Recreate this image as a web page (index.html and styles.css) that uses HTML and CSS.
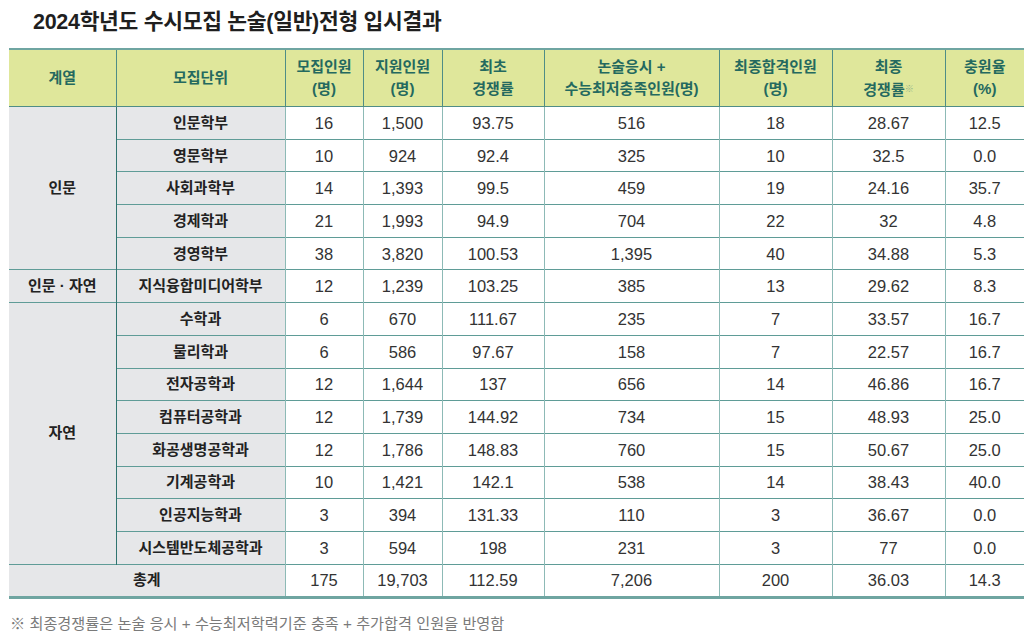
FILE: index.html
```html
<!DOCTYPE html>
<html lang="ko">
<head>
<meta charset="utf-8">
<title>2024학년도 수시모집 논술(일반)전형 입시결과</title>
<link rel="stylesheet" href="styles.css">
</head>
<body>
<div class="page">
  <h1 class="title">2024학년도 수시모집 논술(일반)전형 입시결과</h1>
  <table class="result">
    <colgroup>
      <col class="c1"><col class="c2"><col class="c3"><col class="c4"><col class="c5"><col class="c6"><col class="c7"><col class="c8"><col class="c9">
    </colgroup>
    <thead>
      <tr>
        <th>계열</th>
        <th>모집단위</th>
        <th>모집인원<br>(명)</th>
        <th>지원인원<br>(명)</th>
        <th>최초<br>경쟁률</th>
        <th>논술응시 +<br>수능최저충족인원(명)</th>
        <th>최종합격인원<br>(명)</th>
        <th>최종<br>경쟁률<span class="mark">※</span></th>
        <th>충원율<br>(%)</th>
      </tr>
    </thead>
    <tbody>
      <tr><td class="grp" rowspan="5">인문</td><td class="unit">인문학부</td><td>16</td><td>1,500</td><td>93.75</td><td>516</td><td>18</td><td>28.67</td><td>12.5</td></tr>
      <tr><td class="unit">영문학부</td><td>10</td><td>924</td><td>92.4</td><td>325</td><td>10</td><td>32.5</td><td>0.0</td></tr>
      <tr><td class="unit">사회과학부</td><td>14</td><td>1,393</td><td>99.5</td><td>459</td><td>19</td><td>24.16</td><td>35.7</td></tr>
      <tr><td class="unit">경제학과</td><td>21</td><td>1,993</td><td>94.9</td><td>704</td><td>22</td><td>32</td><td>4.8</td></tr>
      <tr><td class="unit">경영학부</td><td>38</td><td>3,820</td><td>100.53</td><td>1,395</td><td>40</td><td>34.88</td><td>5.3</td></tr>
      <tr><td class="grp">인문 · 자연</td><td class="unit">지식융합미디어학부</td><td>12</td><td>1,239</td><td>103.25</td><td>385</td><td>13</td><td>29.62</td><td>8.3</td></tr>
      <tr><td class="grp" rowspan="8">자연</td><td class="unit">수학과</td><td>6</td><td>670</td><td>111.67</td><td>235</td><td>7</td><td>33.57</td><td>16.7</td></tr>
      <tr><td class="unit">물리학과</td><td>6</td><td>586</td><td>97.67</td><td>158</td><td>7</td><td>22.57</td><td>16.7</td></tr>
      <tr><td class="unit">전자공학과</td><td>12</td><td>1,644</td><td>137</td><td>656</td><td>14</td><td>46.86</td><td>16.7</td></tr>
      <tr><td class="unit">컴퓨터공학과</td><td>12</td><td>1,739</td><td>144.92</td><td>734</td><td>15</td><td>48.93</td><td>25.0</td></tr>
      <tr><td class="unit">화공생명공학과</td><td>12</td><td>1,786</td><td>148.83</td><td>760</td><td>15</td><td>50.67</td><td>25.0</td></tr>
      <tr><td class="unit">기계공학과</td><td>10</td><td>1,421</td><td>142.1</td><td>538</td><td>14</td><td>38.43</td><td>40.0</td></tr>
      <tr><td class="unit">인공지능학과</td><td>3</td><td>394</td><td>131.33</td><td>110</td><td>3</td><td>36.67</td><td>0.0</td></tr>
      <tr><td class="unit">시스템반도체공학과</td><td>3</td><td>594</td><td>198</td><td>231</td><td>3</td><td>77</td><td>0.0</td></tr>
      <tr class="total"><td class="grp" colspan="2">총계</td><td>175</td><td>19,703</td><td>112.59</td><td>7,206</td><td>200</td><td>36.03</td><td>14.3</td></tr>
    </tbody>
  </table>
  <p class="note">※ 최종경쟁률은 논술 응시 + 수능최저학력기준 충족 + 추가합격 인원을 반영함</p>
</div>
</body>
</html>
```

FILE: styles.css
```css
html, body {
  margin: 0;
  padding: 0;
  background: #ffffff;
}
body {
  font-family: "Liberation Sans", "Noto Sans CJK KR", sans-serif;
  color: #333333;
}
.page {
  padding: 0 0 0 9px;
  width: 1015px;
}
.title {
  margin: 0;
  padding: 8px 0 0 24px;
  height: 48px;
  box-sizing: border-box;
  font-size: 21.5px;
  font-weight: bold;
  color: #1f1f1f;
  letter-spacing: -0.3px;
  line-height: 28px;
}
.result {
  width: 1015px;
  border-collapse: collapse;
  table-layout: fixed;
  border-top: 2px solid #6fa5a1;
  border-bottom: 3px solid #6fa5a1;
}
.c1 { width: 107px; }
.c2 { width: 169px; }
.c3 { width: 78px; }
.c4 { width: 79px; }
.c5 { width: 102px; }
.c6 { width: 175px; }
.c7 { width: 113px; }
.c8 { width: 113px; }
.c9 { width: 79px; }

.result th {
  background: #dfe79b;
  color: #24695f;
  font-size: 15px;
  font-weight: bold;
  line-height: 22px;
  height: 56px;
  padding: 0;
  text-align: center;
  border-left: 1px solid #4f8d86;
  border-bottom: 1px solid #4f8d86;
}
.result th:first-child { border-left: none; }
.result th .mark {
  font-size: 9px;
  color: #8fb38a;
  vertical-align: 3px;
}
.result td {
  height: 31.7px;
  padding: 0;
  text-align: center;
  font-size: 16.5px;
  color: #333333;
  border-left: 1px solid #8dbab6;
  border-top: 1px solid #5f9c97;
  line-height: 20px;
}
.result td.grp,
.result td.unit {
  background: #e6e7e9;
  color: #222222;
  font-weight: bold;
  font-size: 15px;
  border-left: 1px solid #2f7470;
}
.result td.grp { border-left: none; }
.note {
  margin: 15px 0 0 1px;
  font-size: 15.2px;
  color: #7a7a7a;
  line-height: 20px;
}
```
